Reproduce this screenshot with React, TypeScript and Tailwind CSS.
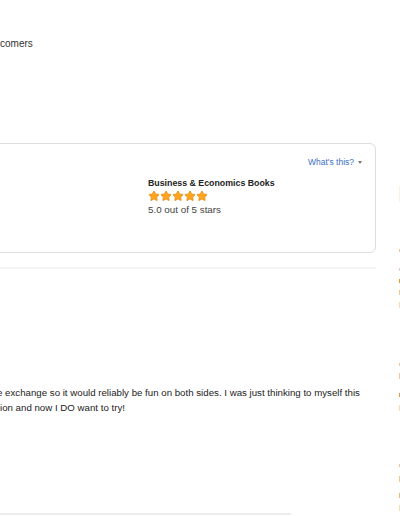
import { Star } from 'lucide-react';

const font = { fontFamily: '"Liberation Sans", Arial, sans-serif' };

function Stars() {
  return (
    <div className="flex items-center">
      {[0, 1, 2, 3, 4].map((i) => (
        <Star key={i} size={12} strokeWidth={1.5} className="fill-[#ffa41c] text-[#e08a12]" />
      ))}
    </div>
  );
}

function RightEdge() {
  // the histogram bars of the next column, only their first pixel shows
  const marks: { top: number; h: number; c: string }[] = [
    { top: 186, h: 16, c: 'bg-[#fdf1d8]' },
    { top: 249, h: 3, c: 'bg-[#f0c88c]' },
    { top: 268, h: 3, c: 'bg-[#e9c4d2]' },
    { top: 279, h: 4, c: 'bg-[#e39a3f]' },
    { top: 290, h: 5, c: 'bg-[#f3c88e]' },
    { top: 302, h: 6, c: 'bg-[#f7dcb2]' },
    { top: 363, h: 3, c: 'bg-[#f0c88c]' },
    { top: 373, h: 6, c: 'bg-[#f3c88e]' },
    { top: 393, h: 4, c: 'bg-[#e39a3f]' },
    { top: 405, h: 6, c: 'bg-[#f7dcb2]' },
    { top: 464, h: 3, c: 'bg-[#f0c88c]' },
    { top: 476, h: 6, c: 'bg-[#f3c88e]' },
    { top: 493, h: 5, c: 'bg-[#f0b86e]' },
    { top: 505, h: 6, c: 'bg-[#f7dcb2]' },
  ];
  return (
    <div className="relative w-[1px] ml-[23px] h-full">
      {marks.map((m, i) => (
        <div key={i} className={`absolute left-0 w-[1px] ${m.c}`} style={{ top: m.top, height: m.h }} />
      ))}
    </div>
  );
}

export default function App() {
  return (
    <div className="w-[400px] h-[516px] overflow-hidden bg-white flex text-[#333]" style={font}>
      <div className="w-[376px] flex flex-col shrink-0">
        <div className="pt-[37px] text-[10px] leading-[14px] text-[#333]">comers</div>

        <div className="mt-[92px] -ml-[20px] h-[110px] border border-[#dddddd] rounded-[6px] flex flex-col">
          <div className="flex justify-end items-center gap-[4px] pt-[12px] pr-[13px]">
            <span className="text-[8.5px] leading-[12px] text-[#3b6fc4]">What's this?</span>
            <span className="w-0 h-0 border-l-[2.5px] border-r-[2.5px] border-t-[3px] border-l-transparent border-r-transparent border-t-[#777]" />
          </div>
          <div className="ml-[167px] mt-[9px] flex flex-col">
            <div className="text-[8.8px] leading-[12px] font-bold text-[#222]">Business &amp; Economics Books</div>
            <div className="mt-[1px]"><Stars /></div>
            <div className="mt-[2px] text-[9.8px] leading-[12px] text-[#444]">5.0 out of 5 stars</div>
          </div>
        </div>

        <div className="mt-[14px] h-[2px] bg-[#f3f3f3]" />

        <div className="mt-[116px] text-[9.7px] leading-[15px] text-[#222] whitespace-nowrap">
          <div className="-ml-[3px]">e exchange so it would reliably be fun on both sides. I was just thinking to myself this</div>
          <div>ion and now I DO want to try!</div>
        </div>

        <div className="mt-auto mb-[1px] w-[291px] h-[2px] bg-[#eeeeee]" />
      </div>
      <RightEdge />
    </div>
  );
}
